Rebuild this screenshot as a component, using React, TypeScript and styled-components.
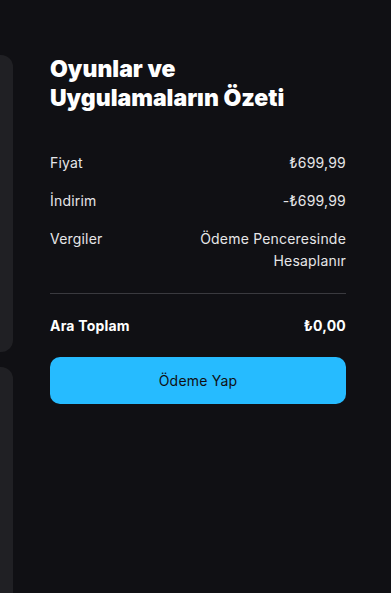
import React from "react";
import styled, { createGlobalStyle } from "styled-components";

const Global = createGlobalStyle`
  html, body { margin: 0; padding: 0; background: #101014; }
  body { font-family: Inter, "Noto Sans", sans-serif; color: #fff; -webkit-font-smoothing: antialiased; }
`;

const Page = styled.div`
  display: flex;
  width: 391px;
  height: 593px;
  overflow: hidden;
  background: #101014;
`;

const Side = styled.div`
  width: 13px;
  flex-shrink: 0;
  display: flex;
  flex-direction: column;
  gap: 15px;
  padding-top: 55px;
`;

const SidePanel = styled.div<{ $h: number }>`
  height: ${(p) => p.$h}px;
  flex-shrink: 0;
  margin-left: -40px;
  border-radius: 12px;
  background: #202024;
`;

const Summary = styled.div`
  width: 296px;
  margin-left: 37px;
  padding-top: 55px;
  display: flex;
  flex-direction: column;
`;

const Title = styled.h2`
  margin: 0 0 39px;
  font-size: 23px;
  line-height: 29px;
  font-weight: 900;
  letter-spacing: 0;
  color: #fff;
`;

const Rows = styled.div`
  display: flex;
  flex-direction: column;
  gap: 16px;
`;

const Row = styled.div<{ $bold?: boolean }>`
  display: flex;
  justify-content: space-between;
  align-items: flex-start;
  font-size: 14px;
  line-height: 22px;
  letter-spacing: 0.2px;
  font-weight: ${(p) => (p.$bold ? 700 : 400)};
  color: ${(p) => (p.$bold ? "#fff" : "#e6e6e8")};
`;

const Value = styled.span`
  text-align: right;
  max-width: 160px;
`;

const Divider = styled.hr`
  margin: 21px 0 21px;
  border: 0;
  border-top: 1px solid #3a3a3f;
  height: 0;
`;

const PayButton = styled.button`
  margin-top: 20px;
  height: 47px;
  width: 100%;
  border: 0;
  border-radius: 10px;
  background: #26bbff;
  color: #101014;
  font-family: Inter, "Noto Sans", sans-serif;
  font-size: 14px;
  letter-spacing: 0.2px;
  font-weight: 400;
  cursor: pointer;
`;

export default function App() {
  return (
    <>
      <Global />
      <Page>
        <Side>
          <SidePanel $h={297} />
          <SidePanel $h={300} />
        </Side>
        <Summary>
          <Title>
            Oyunlar ve
            <br />
            Uygulamaların Özeti
          </Title>
          <Rows>
            <Row>
              <span>Fiyat</span>
              <Value>₺699,99</Value>
            </Row>
            <Row>
              <span>İndirim</span>
              <Value>-₺699,99</Value>
            </Row>
            <Row>
              <span>Vergiler</span>
              <Value>Ödeme Penceresinde Hesaplanır</Value>
            </Row>
          </Rows>
          <Divider />
          <Row $bold>
            <span>Ara Toplam</span>
            <Value>₺0,00</Value>
          </Row>
          <PayButton>Ödeme Yap</PayButton>
        </Summary>
      </Page>
    </>
  );
}
